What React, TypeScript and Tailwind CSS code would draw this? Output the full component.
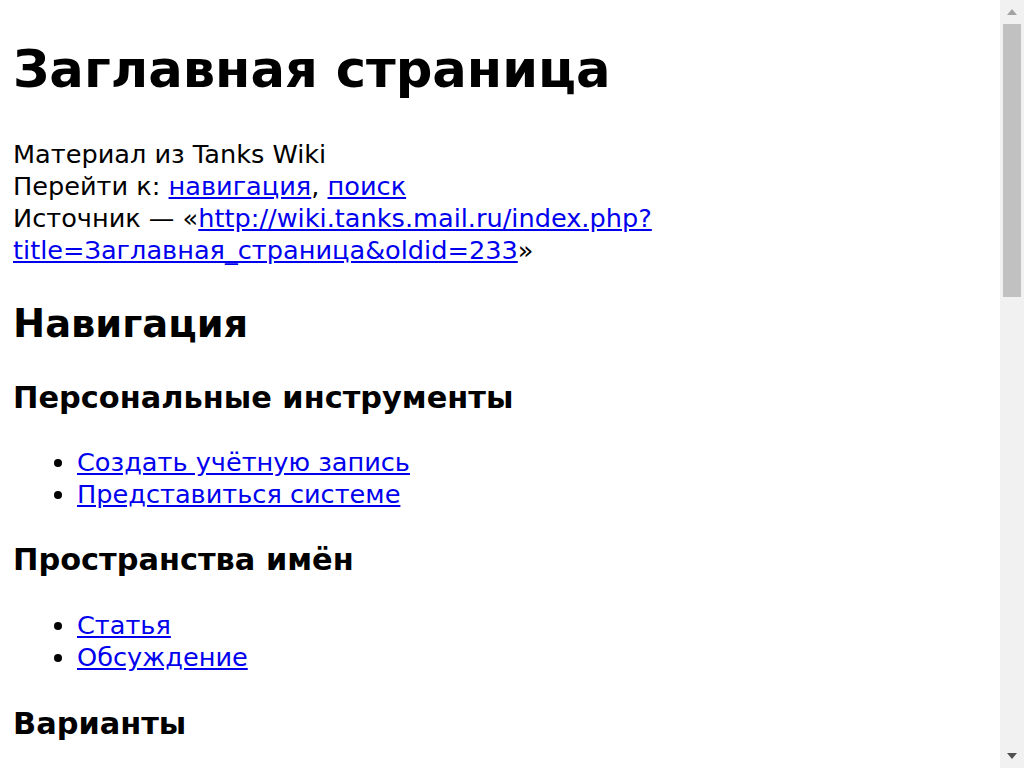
export default function App() {
  return (
    <div className="flex h-screen w-full overflow-hidden bg-white font-['DejaVu_Sans',sans-serif] text-black">
      <div className="flex-1 overflow-hidden px-[13px]">
        <h1 className="mt-[37px] mb-[37px] text-[51.2px] leading-[64px] font-bold">
          Заглавная страница
        </h1>
        <div className="text-[25.6px] leading-[32px]">
          <div>Материал из Tanks Wiki</div>
          <div>
            Перейти к:{" "}
            <a href="#nav" className="text-[#0000ee] underline">
              навигация
            </a>
            ,{" "}
            <a href="#search" className="text-[#0000ee] underline">
              поиск
            </a>
          </div>
          <div>
            Источник — «
            <a href="#src" className="text-[#0000ee] underline">
              http://wiki.tanks.mail.ru/index.php?title=Заглавная_страница&amp;oldid=233
            </a>
            »
          </div>
        </div>

        <h2 className="mt-[34px] mb-[31px] text-[38.4px] leading-[48px] font-bold">
          Навигация
        </h2>

        <h3 className="mt-[30px] mb-[29px] text-[30.4px] leading-[38px] font-bold">
          Персональные инструменты
        </h3>
        <ul className="list-disc pl-[64px] text-[25.6px] leading-[32px]">
          <li>
            <a href="#create" className="text-[#0000ee] underline">
              Создать учётную запись
            </a>
          </li>
          <li>
            <a href="#login" className="text-[#0000ee] underline">
              Представиться системе
            </a>
          </li>
        </ul>

        <h3 className="mt-[31px] mb-[30px] text-[30.4px] leading-[38px] font-bold">
          Пространства имён
        </h3>
        <ul className="list-disc pl-[64px] text-[25.6px] leading-[32px]">
          <li>
            <a href="#article" className="text-[#0000ee] underline">
              Статья
            </a>
          </li>
          <li>
            <a href="#talk" className="text-[#0000ee] underline">
              Обсуждение
            </a>
          </li>
        </ul>

        <h3 className="mt-[32px] mb-[30px] text-[30.4px] leading-[38px] font-bold">
          Варианты
        </h3>
        <ul className="list-disc pl-[64px] text-[25.6px] leading-[32px]">
          <li>
            <a href="#variants" className="text-[#0000ee] underline">
              Просмотры
            </a>
          </li>
        </ul>
      </div>

      {/* scrollbar */}
      <div className="flex w-[24px] shrink-0 flex-col items-center bg-[#f1f1f1]">
        <div className="flex h-[24px] w-full items-center justify-center">
          <svg width="12" height="8" viewBox="0 0 12 8">
            <path d="M6 1 L11 7 L1 7 Z" fill="#a3a3a3" />
          </svg>
        </div>
        <div className="h-[273px] w-[18px] bg-[#c1c1c1]" />
        <div className="flex-1" />
        <div className="flex h-[24px] w-full items-center justify-center">
          <svg width="12" height="8" viewBox="0 0 12 8">
            <path d="M1 1 L11 1 L6 7 Z" fill="#505050" />
          </svg>
        </div>
      </div>
    </div>
  );
}
